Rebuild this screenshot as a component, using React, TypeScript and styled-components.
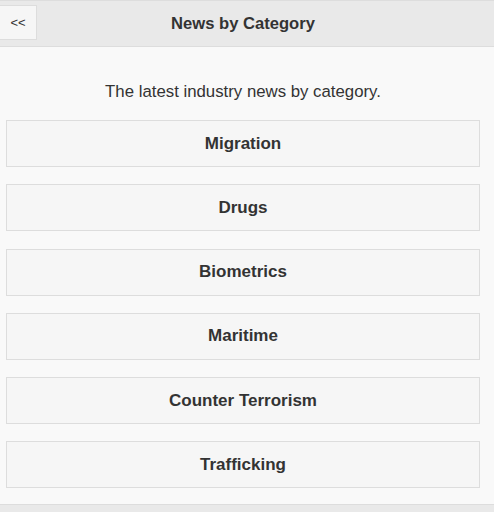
import React from "react";
import styled, { createGlobalStyle } from "styled-components";

const GlobalStyle = createGlobalStyle`
  html, body {
    margin: 0;
    padding: 0;
    background: #f9f9f9;
    font-family: "Liberation Sans", Arial, sans-serif;
    color: #333;
  }
`;

const Page = styled.div`
  display: flex;
  flex-direction: column;
  min-height: 512px;
`;

const Header = styled.header`
  position: relative;
  display: flex;
  align-items: center;
  justify-content: center;
  height: 45px;
  background: #e9e9e9;
  border-top: 1px solid #dddddd;
  border-bottom: 1px solid #dddddd;
`;

const BackButton = styled.a`
  position: absolute;
  left: 0;
  top: 4px;
  width: 37px;
  height: 35px;
  display: flex;
  align-items: center;
  justify-content: center;
  background: #f6f6f6;
  border: 1px solid #dddddd;
  border-left: none;
  box-sizing: border-box;
  font-size: 13px;
  color: #333;
  cursor: pointer;
`;

const Title = styled.h1`
  margin: 0 8px 0 0;
  font-size: 16.6px;
  font-weight: bold;
  color: #333;
`;

const Content = styled.main`
  padding: 35px 14px 0 6px;
  flex: 1;
`;

const Intro = styled.p`
  margin: 0 0 18px;
  text-align: center;
  font-size: 16.8px;
  line-height: 20px;
  color: #333;
`;

const List = styled.div`
  display: flex;
  flex-direction: column;
  gap: 17.25px;
`;

const CategoryButton = styled.a`
  display: flex;
  align-items: center;
  justify-content: center;
  height: 47px;
  box-sizing: border-box;
  background: #f6f6f6;
  border: 1px solid #dddddd;
  font-size: 17px;
  font-weight: bold;
  color: #333;
  cursor: pointer;
`;

const Footer = styled.footer`
  margin-top: 16px;
  height: 8px;
  background: #e9e9e9;
  border-top: 1px solid #dddddd;
`;

const categories = [
  "Migration",
  "Drugs",
  "Biometrics",
  "Maritime",
  "Counter Terrorism",
  "Trafficking",
];

export default function App() {
  return (
    <>
      <GlobalStyle />
      <Page>
        <Header>
          <BackButton>&lt;&lt;</BackButton>
          <Title>News by Category</Title>
        </Header>
        <Content>
          <Intro>The latest industry news by category.</Intro>
          <List>
            {categories.map((c) => (
              <CategoryButton key={c}>{c}</CategoryButton>
            ))}
          </List>
        </Content>
        <Footer />
      </Page>
    </>
  );
}
